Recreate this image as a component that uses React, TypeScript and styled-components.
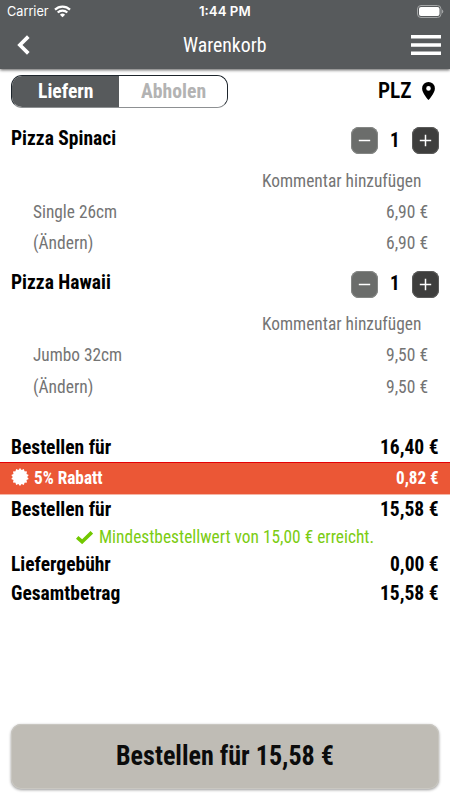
import React, { useLayoutEffect, useRef, useState } from "react";
import styled, { createGlobalStyle } from "styled-components";

const GlobalStyle = createGlobalStyle`
  * { box-sizing: border-box; }
  body { margin: 0; background: #fff; font-family: "Roboto Condensed", Roboto, sans-serif; color: #000; }
  button { font: inherit; color: inherit; padding: 0; border: 0; background: none; }
`;

const Screen = styled.div`
  width: 450px;
  height: 800px;
  display: flex;
  flex-direction: column;
  overflow: hidden;
`;

const FitBox = styled.span<{ $width: number }>`
  display: block;
  flex: none;
  width: ${(p) => p.$width}px;
  white-space: nowrap;
  line-height: 1.2;
`;

const FitInner = styled.span`
  display: inline-block;
  transform-origin: 0 50%;
`;

/* Sets a condensed line of text to a given advance width. */
function Condensed({ width, children }: { width: number; children: string }) {
  const ref = useRef<HTMLSpanElement>(null);
  const [scale, setScale] = useState(1);
  useLayoutEffect(() => {
    const natural = ref.current?.offsetWidth;
    if (natural) setScale(width / natural);
  }, [width, children]);
  return (
    <FitBox $width={width}>
      <FitInner ref={ref} style={{ transform: `scaleX(${scale})` }}>
        {children}
      </FitInner>
    </FitBox>
  );
}

const Header = styled.header`
  height: 69px;
  flex: none;
  background: #575a5c;
  color: #fff;
  box-shadow: 0 1px 3px rgba(0, 0, 0, 0.65);
`;

const StatusBar = styled.div`
  height: 23px;
  padding: 0 6px 0 7px;
  display: grid;
  grid-template-columns: 1fr auto 1fr;
  align-items: center;
  font: 400 13px/23px Inter, sans-serif;
`;

const Carrier = styled.div`
  display: flex;
  align-items: center;
  gap: 5px;
`;

const Clock = styled.div`
  margin-right: 2px;
  font-weight: 600;
`;

const BatteryIcon = styled.svg`
  justify-self: end;
`;

const NavBar = styled.nav`
  height: 44px;
  padding: 0 9px 0 17px;
  display: grid;
  grid-template-columns: 1fr auto 1fr;
  align-items: center;
  font-size: 20px;
`;

const Title = styled.h1`
  margin: 0 9px 0 0;
  font: inherit;
`;

const IconButton = styled.button<{ $end?: boolean }>`
  display: flex;
  justify-self: ${(p) => (p.$end ? "end" : "start")};
`;

const ModeBar = styled.div`
  height: 46px;
  flex: none;
  padding: 0 15px 2px 11px;
  display: flex;
  align-items: center;
  justify-content: space-between;
`;

const Segmented = styled.div`
  width: 217px;
  height: 33px;
  display: flex;
  overflow: hidden;
  border: 1px solid #1d252c;
  border-bottom-color: #8d9092;
  border-radius: 11px;
`;

const Segment = styled.button<{ $active?: boolean }>`
  width: ${(p) => (p.$active ? 107 : 108)}px;
  display: flex;
  align-items: center;
  justify-content: center;
  font-size: 20px;
  font-weight: 700;
  background: ${(p) => (p.$active ? "#575a5c" : "#fff")};
  color: ${(p) => (p.$active ? "#fff" : "#b3b3b3")};
`;

const Postcode = styled.button`
  display: flex;
  align-items: center;
  gap: 10px;
  padding-top: 1px;
  font-size: 22px;
  font-weight: 600;
`;

const Item = styled.section`
  height: 143.5px;
  flex: none;
`;

const ItemHead = styled.div`
  height: 51px;
  padding: 0 11px;
  display: flex;
  align-items: center;
  justify-content: space-between;
`;

const ItemName = styled.h2`
  margin: 0 0 3px;
  font-size: 19.5px;
  font-weight: 700;
`;

const Stepper = styled.div`
  display: flex;
  align-items: center;
  gap: 12px;
  font-size: 21px;
  font-weight: 700;
`;

const StepButton = styled.button<{ $muted?: boolean }>`
  width: 27px;
  height: 27px;
  display: flex;
  align-items: center;
  justify-content: center;
  border-radius: 8px;
  background: ${(p) => (p.$muted ? "#6b6d6b" : "#3e3e3d")};
  box-shadow: inset 0 0 0 1px ${(p) => (p.$muted ? "#858785" : "#5b5b5a")};
`;

const DetailRow = styled.div<{ $comment?: boolean }>`
  height: ${(p) => (p.$comment ? 30 : 31.5)}px;
  padding: ${(p) => (p.$comment ? "0 29px" : "1px 22px 0 33px")};
  display: flex;
  align-items: center;
  justify-content: ${(p) => (p.$comment ? "flex-end" : "space-between")};
  font-size: 17.5px;
  font-weight: 400;
  color: #747474;
`;

const Summary = styled.section`
  margin-top: 29px;
  font-size: 19.5px;
  font-weight: 700;
`;

const SumRow = styled.div<{ $height: number }>`
  height: ${(p) => p.$height}px;
  padding: 2px 11px 0;
  display: flex;
  align-items: center;
  justify-content: space-between;
`;

const Discount = styled.div`
  height: 33px;
  padding: 0 11px;
  display: flex;
  align-items: center;
  justify-content: space-between;
  background: #eb5736;
  border-top: 1px solid #e60005;
  border-bottom: 1px solid #f5b5a5;
  color: #fff;
  font-size: 17.5px;
`;

const DiscountLabel = styled.div`
  display: flex;
  align-items: center;
  gap: 5px;
`;

const SealIcon = styled.svg`
  margin-bottom: 3px;
`;

const Notice = styled.div`
  height: 26px;
  padding-top: 2px;
  display: flex;
  align-items: center;
  justify-content: center;
  gap: 6px;
  color: #7bcc12;
  font-size: 17.5px;
  font-weight: 400;
`;

const OrderButton = styled.button`
  width: 428px;
  height: 65px;
  margin: auto 11px 11px;
  flex: none;
  display: flex;
  align-items: center;
  justify-content: center;
  border-radius: 10px;
  background: #bfbcb5;
  color: #0c0c0c;
  font-size: 27px;
  font-weight: 700;
  box-shadow: 0 1px 3px rgba(0, 0, 0, 0.4), inset 0 0 0 1px #c9c7c1;
`;

const items = [
  { name: "Pizza Spinaci", nameWidth: 105, size: "Single 26cm", sizeWidth: 84, price: "6,90 €" },
  { name: "Pizza Hawaii", nameWidth: 100, size: "Jumbo 32cm", sizeWidth: 89, price: "9,50 €" },
];

const sealPoints = Array.from({ length: 28 }, (_, i) => {
  const r = i % 2 ? 7.2 : 9;
  const a = (i * Math.PI) / 14;
  return `${9 + r * Math.sin(a)},${9 - r * Math.cos(a)}`;
}).join(" ");

function StepIcon({ plus }: { plus?: boolean }) {
  return (
    <svg width="13" height="13" viewBox="0 0 13 13" stroke="#fff" strokeWidth="1.5">
      <path d={plus ? "M.8 6.5h11.4M6.5.8v11.4" : "M.8 6.5h11.4"} />
    </svg>
  );
}

export default function App() {
  return (
    <Screen>
      <GlobalStyle />
      <Header>
        <StatusBar>
          <Carrier>
            <Condensed width={42}>Carrier</Condensed>
            <svg width="17" height="13" viewBox="0 0 17 13" fill="none" stroke="#fff" strokeWidth="2.2">
              <path d="M1 4.6a10.8 10.8 0 0 1 15 0M3.7 7.5a6.9 6.9 0 0 1 9.6 0" />
              <path d="M8.5 12.3 5.9 9.7a3.8 3.8 0 0 1 5.2 0Z" fill="#fff" stroke="none" />
            </svg>
          </Carrier>
          <Clock><Condensed width={52}>1:44 PM</Condensed></Clock>
          <BatteryIcon width="27" height="13" viewBox="0 0 27 13">
            <rect x=".5" y=".5" width="23.5" height="12" rx="3.5" fill="none" stroke="#a3a5a6" />
            <rect x="2" y="2" width="20.5" height="9" rx="2" fill="#fff" />
            <path d="M25 4.5a2.2 2.2 0 0 1 0 4Z" fill="#a3a5a6" />
          </BatteryIcon>
        </StatusBar>
        <NavBar>
          <IconButton aria-label="Zurück">
            <svg width="13" height="20" viewBox="0 0 13 20" fill="none" stroke="#fff" strokeWidth="3.7">
              <path d="M11.3 1.6 2.9 10l8.4 8.4" />
            </svg>
          </IconButton>
          <Title><Condensed width={83}>Warenkorb</Condensed></Title>
          <IconButton $end aria-label="Menü">
            <svg width="30" height="20" viewBox="0 0 30 20" fill="#fff">
              <path d="M0 0h30v3.5H0zM0 8.2h30v3.5H0zM0 16.5h30V20H0z" />
            </svg>
          </IconButton>
        </NavBar>
      </Header>

      <ModeBar>
        <Segmented>
          <Segment $active><Condensed width={56}>Liefern</Condensed></Segment>
          <Segment><Condensed width={65}>Abholen</Condensed></Segment>
        </Segmented>
        <Postcode>
          <Condensed width={34}>PLZ</Condensed>
          <svg width="13" height="18" viewBox="0 0 13 18">
            <path fillRule="evenodd" d="M6.5 0A6.4 6.4 0 0 0 .1 6.4C.1 11.2 6.5 18 6.5 18s6.4-6.8 6.4-11.6A6.4 6.4 0 0 0 6.5 0Zm0 4.1a2.3 2.3 0 1 1 0 4.6 2.3 2.3 0 0 1 0-4.6Z" />
          </svg>
        </Postcode>
      </ModeBar>

      {items.map((item) => (
        <Item key={item.name}>
          <ItemHead>
            <ItemName><Condensed width={item.nameWidth}>{item.name}</Condensed></ItemName>
            <Stepper>
              <StepButton $muted aria-label="Weniger"><StepIcon /></StepButton>
              <Condensed width={10}>1</Condensed>
              <StepButton aria-label="Mehr"><StepIcon plus /></StepButton>
            </Stepper>
          </ItemHead>
          <DetailRow $comment><Condensed width={159}>Kommentar hinzufügen</Condensed></DetailRow>
          <DetailRow>
            <Condensed width={item.sizeWidth}>{item.size}</Condensed>
            <Condensed width={42}>{item.price}</Condensed>
          </DetailRow>
          <DetailRow>
            <Condensed width={60}>(Ändern)</Condensed>
            <Condensed width={42}>{item.price}</Condensed>
          </DetailRow>
        </Item>
      ))}

      <Summary>
        <SumRow $height={31}>
          <Condensed width={100}>Bestellen für</Condensed>
          <Condensed width={59}>16,40 €</Condensed>
        </SumRow>
        <Discount>
          <DiscountLabel>
            <SealIcon width="18" height="18" viewBox="0 0 18 18" fill="#fff"><polygon points={sealPoints} /></SealIcon>
            <Condensed width={69}>5% Rabatt</Condensed>
          </DiscountLabel>
          <Condensed width={43}>0,82 €</Condensed>
        </Discount>
        <SumRow $height={28}>
          <Condensed width={100}>Bestellen für</Condensed>
          <Condensed width={59}>15,58 €</Condensed>
        </SumRow>
        <Notice>
          <svg width="17" height="13" viewBox="0 0 17 13" fill="none" stroke="#72c800" strokeWidth="3.6">
            <path d="m1.2 6.3 4.9 4.4L15.8 1.3" />
          </svg>
          <Condensed width={275}>Mindestbestellwert von 15,00 € erreicht.</Condensed>
        </Notice>
        <SumRow $height={29}>
          <Condensed width={100}>Liefergebühr</Condensed>
          <Condensed width={49}>0,00 €</Condensed>
        </SumRow>
        <SumRow $height={30}>
          <Condensed width={109}>Gesamtbetrag</Condensed>
          <Condensed width={59}>15,58 €</Condensed>
        </SumRow>
      </Summary>

      <OrderButton><Condensed width={218}>Bestellen für 15,58 €</Condensed></OrderButton>
    </Screen>
  );
}
